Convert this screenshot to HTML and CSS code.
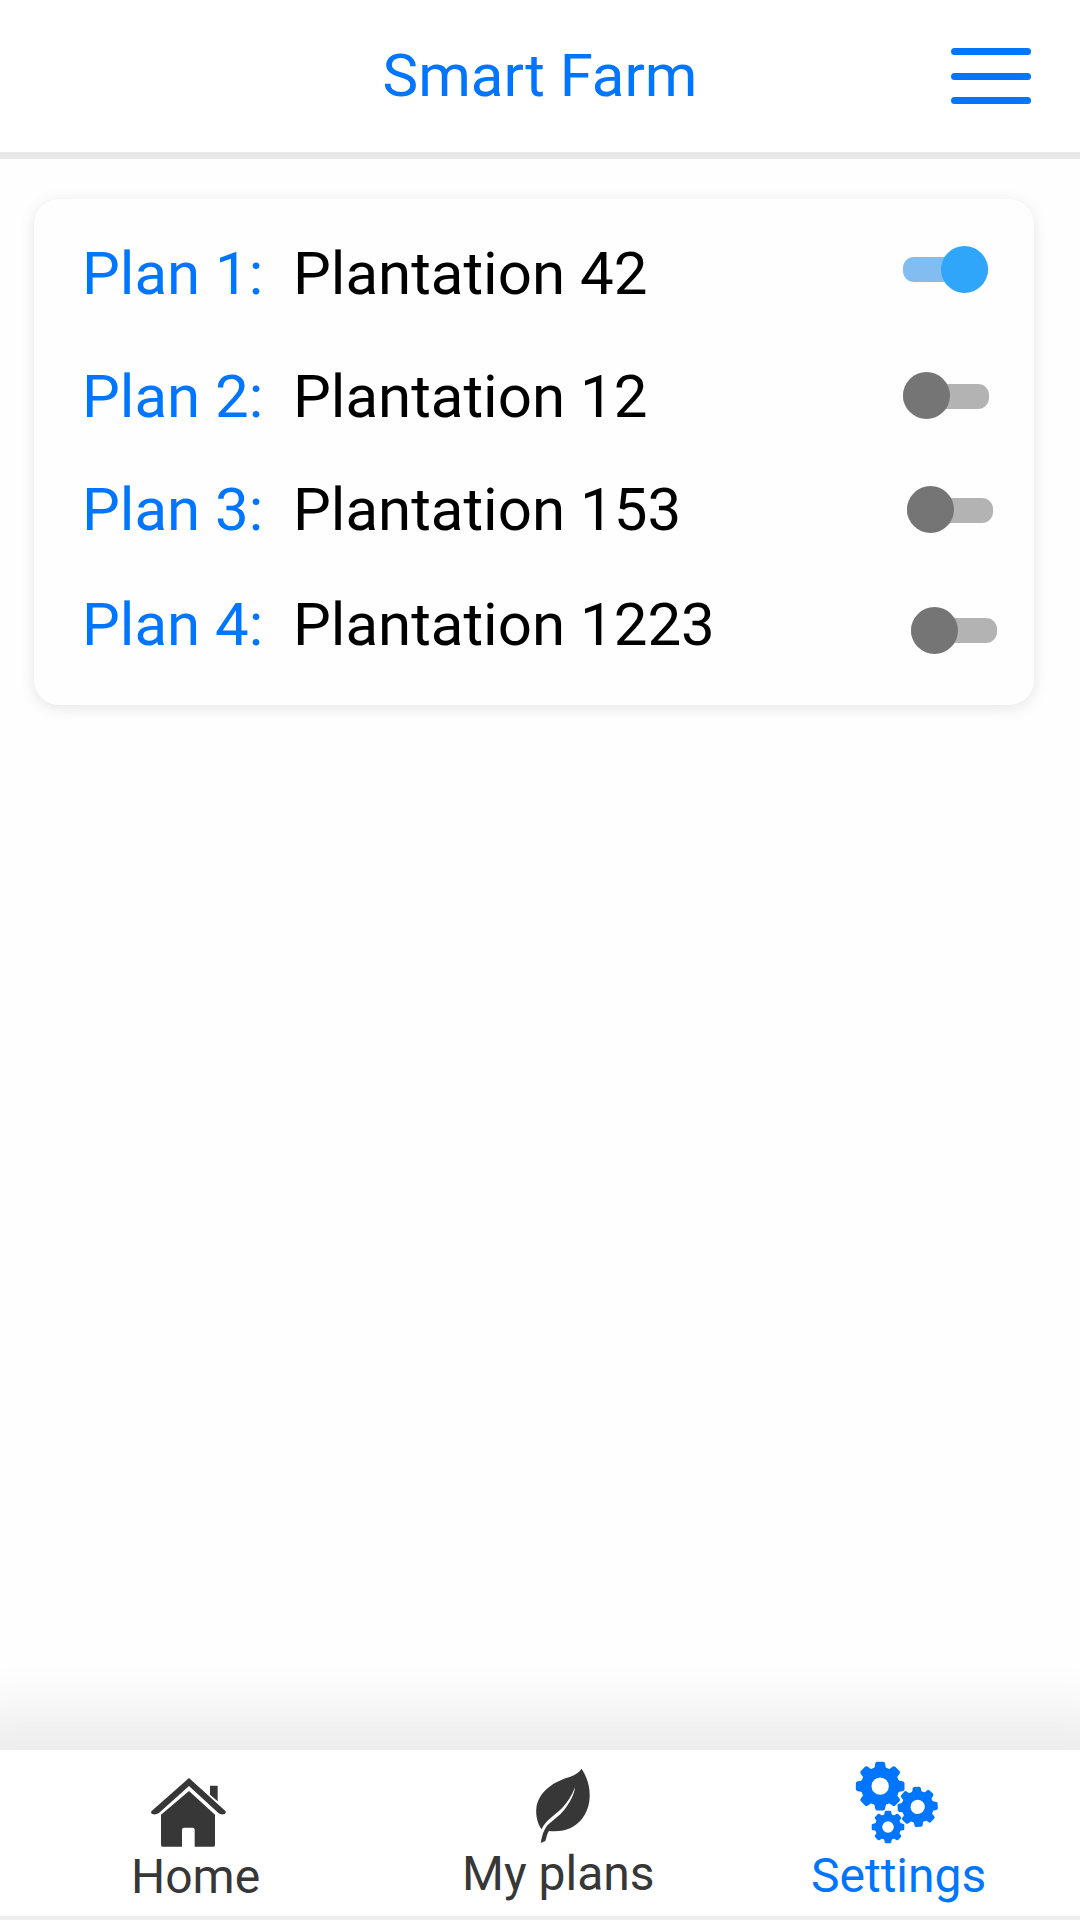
FILE: index.html
```html
<!DOCTYPE html>
<html lang="en">
<head>
<meta charset="utf-8">
<title>Smart Farm</title>
<link rel="stylesheet" href="styles.css">
</head>
<body>
<div class="app">
  <header class="header">
    <h1 class="title">Smart Farm</h1>
    <button class="menu" aria-label="Menu"><span class="bar"></span><span class="bar"></span><span class="bar"></span></button>
  </header>
  <main class="content">
    <section class="card">
      <div class="plan plan-1"><span class="label">Plan 1:</span><span class="name">Plantation 42</span><span class="toggle on"><span class="track"></span><span class="knob"></span></span></div>
      <div class="plan plan-2"><span class="label">Plan 2:</span><span class="name">Plantation 12</span><span class="toggle"><span class="track"></span><span class="knob"></span></span></div>
      <div class="plan plan-3"><span class="label">Plan 3:</span><span class="name">Plantation 153</span><span class="toggle"><span class="track"></span><span class="knob"></span></span></div>
      <div class="plan plan-4"><span class="label">Plan 4:</span><span class="name">Plantation 1223</span><span class="toggle"><span class="track"></span><span class="knob"></span></span></div>
    </section>
  </main>
  <nav class="nav">
    <a class="tab home">
      <svg class="icon" width="78" height="72" viewBox="150 110 234 216" fill="currentColor">
        <path d="M267 113 L377 213 Q379 221 370 222 Q362 223 356 219 L267 137 L176 219 Q168 223 160 222 Q151 221 154 213 Z"/>
        <path d="M330 136 H353 V183 L330 163 Z"/>
        <path d="M267 152 L345 223 V314 Q345 319 340 319 H284 V268 Q284 262 278 262 H252 Q246 262 246 268 V319 H188 Q183 319 183 314 V223 Z"/>
      </svg>
      <span class="text">Home</span>
    </a>
    <a class="tab plans">
      <svg class="icon" width="56" height="76" viewBox="285 84 168 228" fill="currentColor">
        <path d="M425 86 C436 104 450 132 449 168 C449 222 411 282 327 273 C321 280 320 292 316 303 L302 309 C306 287 311 270 322 256 C338 241 358 228 373 209 C391 186 403 162 405 142 C395 168 382 188 367 203 C345 226 316 240 305 268 C292 251 287 225 289 206 C294 157 339 125 389 111 C405 105 418 96 425 86 Z"/>
      </svg>
      <span class="text">My plans</span>
    </a>
    <a class="tab settings active">
      <svg class="icon" width="84" height="84" viewBox="46 64 252 252">
        <defs>
          <g id="gear">
            <circle r="42" fill="none" stroke="currentColor" stroke-width="32"/>
            <g fill="currentColor">
              <path id="tooth" d="M-20 -51 Q-15 -56 -15 -67 Q-14 -73 -9 -73 H9 Q14 -73 15 -67 Q15 -56 20 -51 Z"/>
              <use href="#tooth" transform="rotate(45)"/>
              <use href="#tooth" transform="rotate(90)"/>
              <use href="#tooth" transform="rotate(135)"/>
              <use href="#tooth" transform="rotate(180)"/>
              <use href="#tooth" transform="rotate(225)"/>
              <use href="#tooth" transform="rotate(270)"/>
              <use href="#tooth" transform="rotate(315)"/>
            </g>
          </g>
        </defs>
        <use href="#gear" transform="translate(121.5 139.5)"/>
        <use href="#gear" transform="translate(234 201.5) rotate(-3) scale(.825)"/>
        <use href="#gear" transform="translate(145 262) scale(.67)"/>
      </svg>
      <span class="text">Settings</span>
    </a>
  </nav>
</div>
</body>
</html>
```

FILE: styles.css
```css
* { box-sizing: border-box; }

body {
  margin: 0;
  background: #fefefe;
  font-family: Roboto, "Liberation Sans", sans-serif;
}

.app {
  display: flex;
  flex-direction: column;
  width: 1080px;
  height: 1920px;
  overflow: hidden;
}

.header {
  display: grid;
  grid-template-columns: 1fr auto 1fr;
  align-items: start;
  height: 159px;
  padding: 45px 49px 0;
  border-bottom: 7px solid #e8e8e8;
  background: #fff;
}

.title {
  grid-column: 2;
  margin: 0;
  color: #0075ff;
  font-size: 60px;
  font-weight: 400;
  line-height: 61px;
}

.menu {
  display: flex;
  flex-direction: column;
  justify-content: space-between;
  justify-self: end;
  width: 80px;
  height: 56px;
  margin: 3px 0 0;
  padding: 0;
  border: 0;
  background: none;
}

.bar {
  height: 7px;
  border-radius: 4px;
  background: #0075ff;
}

.content {
  flex: 1;
  padding: 40px 46px 0 34px;
}

.card {
  height: 506px;
  padding: 44px 37px 0 48px;
  border-radius: 25px;
  background: #fefefe;
  box-shadow: 0 3px 15px rgba(0, 0, 0, .1);
}

.plan {
  display: flex;
  align-items: flex-start;
  font-size: 60px;
  line-height: 61px;
}

.plan-1 { margin-bottom: 62px; }
.plan-2 { margin-bottom: 52px; }
.plan-3 { margin-bottom: 54px; }

.label {
  width: 211px;
  color: #0075ff;
}

.name { color: #000; }

.toggle {
  display: grid;
  align-items: start;
  width: 86px;
  height: 47px;
  margin-left: auto;
}

.plan-1 .toggle { width: 85px; margin-top: 3px; margin-right: 9px; }
.plan-2 .toggle { margin-top: 6px; margin-right: 8px; }
.plan-3 .toggle { margin-top: 7px; margin-right: 4px; }
.plan-4 .toggle { margin-top: 13px; }

.track,
.knob { grid-area: 1 / 1; }

.track {
  height: 25px;
  margin-top: 12px;
  border-radius: 11px;
  background: #b3b3b3;
}

.plan-1 .track,
.plan-4 .track { margin-top: 11px; }

.knob {
  width: 47px;
  height: 47px;
  border-radius: 50%;
  background: #757575;
}

.on .track { background: #82bdf1; }
.on .knob { justify-self: end; background: #2fa6fa; }

.nav {
  display: grid;
  grid-template-columns: 378px 360px 342px;
  height: 170px;
  border-bottom: 4px solid #eee;
  background: #fff;
  box-shadow: 0 0 54px 38px rgba(0, 0, 0, .075);
}

.tab {
  display: flex;
  flex-direction: column;
  align-items: flex-start;
  color: #373737;
  font-size: 48px;
  line-height: 48px;
}

.active { color: #0075ff; }

.home .icon { margin: 27px 0 0 150px; }
.home .text { margin: 4px 0 0 131px; }
.plans .icon { margin: 18px 0 0 157px; }
.plans .text { margin: 6px 0 0 84px; }
.settings .icon { margin: 11px 0 0 117px; }
.settings .text { margin: 7px 0 0 73px; }
```
